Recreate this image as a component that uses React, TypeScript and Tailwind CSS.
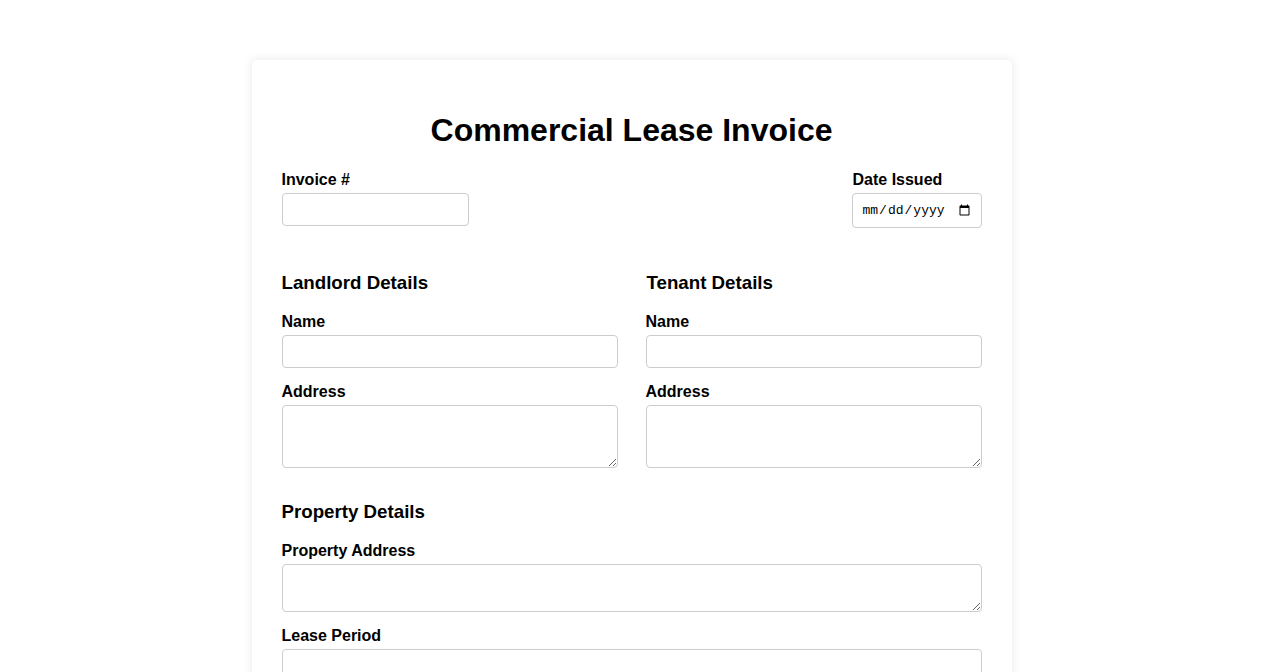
import React from "react";

const inputCls =
  "block w-full h-[33px] border border-[#cccccc] rounded-[4px] px-2 bg-white text-[14px] outline-none";
const areaCls =
  "block w-full border border-[#cccccc] rounded-[4px] px-2 py-1 bg-white text-[14px] outline-none";
const labelCls = "block font-bold text-[16px] leading-[18px] mb-[4px] text-black";
const headCls = "font-bold text-[18.72px] leading-[22px] text-black mb-[19px]";

function Field({
  label,
  children,
  className = "",
}: {
  label: string;
  children: React.ReactNode;
  className?: string;
}) {
  return (
    <div className={"mb-[15px] " + className}>
      <label className={labelCls}>{label}</label>
      {children}
    </div>
  );
}

export default function App() {
  return (
    <div
      className="min-h-screen bg-white pt-[60px] pb-[40px]"
      style={{ fontFamily: '"Liberation Sans", Arial, sans-serif' }}
    >
      <div className="mx-auto w-[760px] bg-white rounded-[5px] shadow-[0_0_10px_rgba(0,0,0,0.1)] px-[30px] pt-[30px] pb-[30px]">
        <h1 className="mt-[22px] text-center font-bold text-[32px] leading-[36px] text-black">
          Commercial Lease Invoice
        </h1>

        <div className="mt-[23px] flex justify-between items-start">
          <div>
            <label className={labelCls}>Invoice #</label>
            <input type="text" className="block w-[187px] h-[33px] border border-[#cccccc] rounded-[4px] px-2 text-[14px] outline-none" />
          </div>
          <div>
            <label className={labelCls + " pl-px"}>Date Issued</label>
            <input
              type="date"
              className="block w-[130px] h-[35px] border border-[#cccccc] rounded-[4px] pl-[9px] pr-[8px] text-[13px] outline-none"
              style={{ fontFamily: '"Liberation Mono", "DejaVu Sans Mono", monospace' }}
            />
          </div>
        </div>

        <div className="mt-[44px] grid grid-cols-2 gap-x-[28px]">
          <div>
            <h3 className={headCls}>Landlord Details</h3>
            <Field label="Name">
              <input type="text" className={inputCls} />
            </Field>
            <Field label="Address">
              <textarea className={areaCls + " h-[63px]"} />
            </Field>
          </div>
          <div>
            <h3 className={headCls + " pl-px"}>Tenant Details</h3>
            <Field label="Name">
              <input type="text" className={inputCls} />
            </Field>
            <Field label="Address">
              <textarea className={areaCls + " h-[63px]"} />
            </Field>
          </div>
        </div>

        <div className="mt-[18px]">
          <h3 className={headCls}>Property Details</h3>
          <Field label="Property Address">
            <textarea className={areaCls + " h-[48px]"} />
          </Field>
          <Field label="Lease Period" className="mb-0">
            <input type="text" className={inputCls} />
          </Field>
        </div>
      </div>
    </div>
  );
}
